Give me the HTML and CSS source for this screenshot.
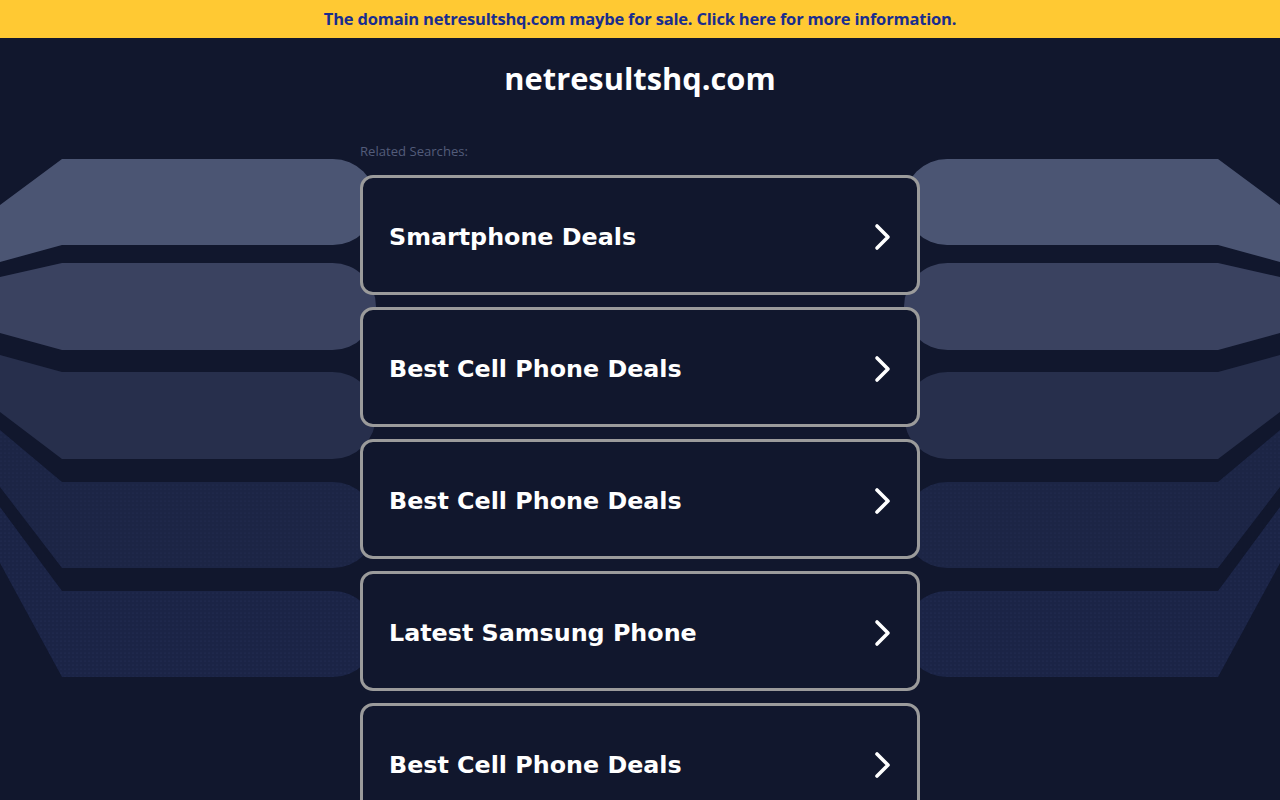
FILE: index.html
```html
<!DOCTYPE html>
<html lang="en">
<head>
<meta charset="utf-8">
<title>netresultshq.com</title>
<link rel="stylesheet" href="styles.css">
</head>
<body>
<svg class="bg-art" width="1280" height="800" viewBox="0 0 1280 800" aria-hidden="true">
  <defs>
    <pattern id="dots" width="4" height="4" patternUnits="userSpaceOnUse">
      <circle cx="1" cy="1" r="0.6" fill="#2a3560"/>
    </pattern>
    <g id="bands">
      <path d="M0,205 L62,159 L333,159 A43,43 0 0 1 333,245 L62,245 L0,262 Z" fill="#4b5573"/>
      <path d="M0,277 L62,263 L332.5,263 A43.5,43.5 0 0 1 332.5,350 L62,350 L0,333 Z" fill="#3a4260"/>
      <path d="M0,355 L62,372 L332.5,372 A43.5,43.5 0 0 1 332.5,459 L62,459 L0,412 Z" fill="#272f4c"/>
      <path d="M0,430 L62,482 L333,482 A43,43 0 0 1 333,568 L62,568 L0,487 Z" fill="#1c2545"/>
      <path d="M0,430 L62,482 L333,482 A43,43 0 0 1 333,568 L62,568 L0,487 Z" fill="url(#dots)" opacity="0.6"/>
      <path d="M0,507 L62,591 L333,591 A43,43 0 0 1 333,677 L62,677 L0,563 Z" fill="#1b2446"/>
      <path d="M0,507 L62,591 L333,591 A43,43 0 0 1 333,677 L62,677 L0,563 Z" fill="url(#dots)" opacity="0.8"/>
    </g>
  </defs>
  <use href="#bands"/>
  <use href="#bands" transform="matrix(-1 0 0 1 1280 0)"/>
</svg>

<div class="page">
  <a class="sale-banner" href="#">The domain netresultshq.com maybe for sale. Click here for more information.</a>
  <h1 class="domain">netresultshq.com</h1>
  <main class="results">
    <p class="related">Related Searches:</p>
    <ul class="link-list">
      <li><a class="link-card" href="#"><span>Smartphone Deals</span><svg class="chev" width="20" height="28" viewBox="0 0 20 28"><path d="M4,3 L15,14 L4,25" fill="none" stroke="#fff" stroke-width="3.6" stroke-linecap="round" stroke-linejoin="round"/></svg></a></li>
      <li><a class="link-card" href="#"><span>Best Cell Phone Deals</span><svg class="chev" width="20" height="28" viewBox="0 0 20 28"><path d="M4,3 L15,14 L4,25" fill="none" stroke="#fff" stroke-width="3.6" stroke-linecap="round" stroke-linejoin="round"/></svg></a></li>
      <li><a class="link-card" href="#"><span>Best Cell Phone Deals</span><svg class="chev" width="20" height="28" viewBox="0 0 20 28"><path d="M4,3 L15,14 L4,25" fill="none" stroke="#fff" stroke-width="3.6" stroke-linecap="round" stroke-linejoin="round"/></svg></a></li>
      <li><a class="link-card" href="#"><span>Latest Samsung Phone</span><svg class="chev" width="20" height="28" viewBox="0 0 20 28"><path d="M4,3 L15,14 L4,25" fill="none" stroke="#fff" stroke-width="3.6" stroke-linecap="round" stroke-linejoin="round"/></svg></a></li>
      <li><a class="link-card" href="#"><span>Best Cell Phone Deals</span><svg class="chev" width="20" height="28" viewBox="0 0 20 28"><path d="M4,3 L15,14 L4,25" fill="none" stroke="#fff" stroke-width="3.6" stroke-linecap="round" stroke-linejoin="round"/></svg></a></li>
    </ul>
  </main>
</div>
</body>
</html>
```

FILE: styles.css
```css
* { box-sizing: border-box; }

html, body {
  margin: 0;
  padding: 0;
  background: #11172d;
  height: 100%;
  overflow: hidden;
}

body {
  position: relative;
  font-family: "Open Sans", "Liberation Sans", sans-serif;
}

.bg-art {
  position: absolute;
  top: 0;
  left: 0;
  z-index: 0;
}

.page {
  position: relative;
  z-index: 1;
  display: flex;
  flex-direction: column;
  align-items: center;
}

.sale-banner {
  display: block;
  width: 100%;
  height: 38px;
  line-height: 38px;
  background: #ffc933;
  color: #1a2d8e;
  text-align: center;
  text-decoration: none;
  font-family: "Open Sans", "Liberation Sans", sans-serif;
  font-weight: 700;
  font-size: 16.5px;
  letter-spacing: -0.2px;
}

.domain {
  margin: 22px 0 0;
  color: #ffffff;
  font-family: "Open Sans", "Liberation Sans", sans-serif;
  font-weight: 700;
  font-size: 30.8px;
  line-height: 36px;
  letter-spacing: 0;
}

.results {
  width: 560px;
  margin-top: 47px;
}

.related {
  margin: 0 0 16px;
  color: #535c7a;
  font-family: "Open Sans", "Liberation Sans", sans-serif;
  font-size: 13.1px;
  line-height: 16px;
}

.link-list {
  list-style: none;
  margin: 0;
  padding: 0;
  display: flex;
  flex-direction: column;
  gap: 12px;
}

.link-card {
  display: flex;
  align-items: center;
  justify-content: space-between;
  height: 120px;
  padding: 3px 24px 0 26px;
  background: #11172d;
  border: 3px solid #9b9b9b;
  border-radius: 13px;
  color: #ffffff;
  text-decoration: none;
  font-family: "DejaVu Sans", Verdana, sans-serif;
  font-weight: 700;
  font-size: 23.8px;
}

.chev {
  display: block;
  flex: none;
}
```
